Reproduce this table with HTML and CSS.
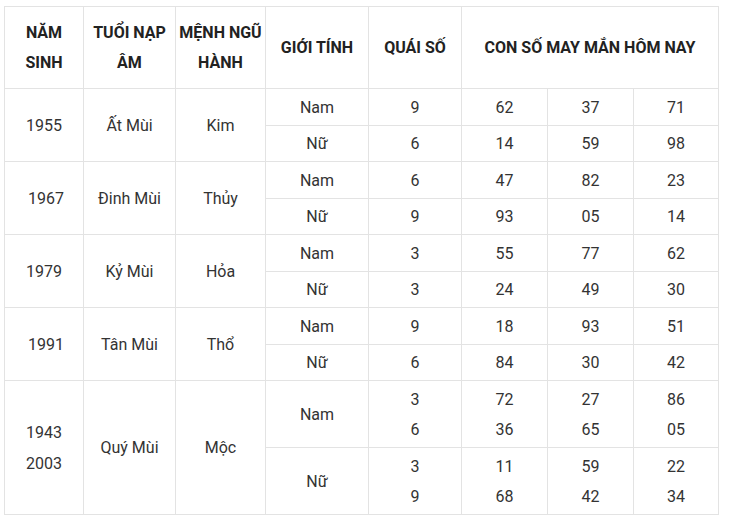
FILE: index.html
```html
<!DOCTYPE html>
<html lang="vi">
<head>
<meta charset="utf-8">
<title>Con số may mắn</title>
<link rel="stylesheet" href="styles.css">
</head>
<body>
<div class="wrap">
<table class="lucky">
  <colgroup>
    <col class="c-year"><col class="c-age"><col class="c-menh"><col class="c-sex"><col class="c-quai"><col class="c-n1"><col class="c-n2"><col class="c-n3">
  </colgroup>
  <thead>
    <tr>
      <th>NĂM SINH</th>
      <th>TUỔI NẠP ÂM</th>
      <th>MỆNH NGŨ HÀNH</th>
      <th>GIỚI TÍNH</th>
      <th>QUÁI SỐ</th>
      <th colspan="3">CON SỐ MAY MẮN HÔM NAY</th>
    </tr>
  </thead>
  <tbody>
    <tr><td rowspan="2">1955</td><td rowspan="2">Ất Mùi</td><td rowspan="2">Kim</td><td>Nam</td><td>9</td><td>62</td><td>37</td><td>71</td></tr>
    <tr><td>Nữ</td><td>6</td><td>14</td><td>59</td><td>98</td></tr>
    <tr><td rowspan="2" class="shift">1967</td><td rowspan="2">Đinh Mùi</td><td rowspan="2">Thủy</td><td>Nam</td><td>6</td><td>47</td><td>82</td><td>23</td></tr>
    <tr><td>Nữ</td><td>9</td><td>93</td><td>05</td><td>14</td></tr>
    <tr><td rowspan="2">1979</td><td rowspan="2">Kỷ Mùi</td><td rowspan="2">Hỏa</td><td>Nam</td><td>3</td><td>55</td><td>77</td><td>62</td></tr>
    <tr><td>Nữ</td><td>3</td><td>24</td><td>49</td><td>30</td></tr>
    <tr><td rowspan="2" class="shift">1991</td><td rowspan="2">Tân Mùi</td><td rowspan="2">Thổ</td><td>Nam</td><td>9</td><td>18</td><td>93</td><td>51</td></tr>
    <tr><td>Nữ</td><td>6</td><td>84</td><td>30</td><td>42</td></tr>
    <tr><td rowspan="2">1943<br>2003</td><td rowspan="2">Quý Mùi</td><td rowspan="2">Mộc</td><td>Nam</td><td>3<br>6</td><td>72<br>36</td><td>27<br>65</td><td>86<br>05</td></tr>
    <tr><td>Nữ</td><td>3<br>9</td><td>11<br>68</td><td>59<br>42</td><td>22<br>34</td></tr>
  </tbody>
</table>
</div>
</body>
</html>
```
FILE: styles.css
```css
html, body {
  margin: 0;
  padding: 0;
  background: #ffffff;
}
.wrap {
  padding: 6px 0 0 4px;
}
.lucky {
  border-collapse: collapse;
  table-layout: fixed;
  width: 714px;
  font-family: Roboto, "Liberation Sans", Arial, sans-serif;
  font-size: 16px;
  color: #333333;
}
.c-year { width: 79px; }
.c-age { width: 92px; }
.c-menh { width: 90px; }
.c-sex { width: 103px; }
.c-quai { width: 93px; }
.c-n1 { width: 86px; }
.c-n2 { width: 86px; }
.c-n3 { width: 85px; }
.lucky th,
.lucky td {
  border: 1px solid #e3e3e3;
  text-align: center;
  vertical-align: middle;
  line-height: 30.5px;
}
.lucky th {
  font-weight: 700;
  color: #222222;
  padding: 10.5px 2px 9.5px;
}
.lucky td {
  padding: 3.5px 2px 1.5px;
}
.lucky td.shift {
  padding-left: 6px;
}
```
